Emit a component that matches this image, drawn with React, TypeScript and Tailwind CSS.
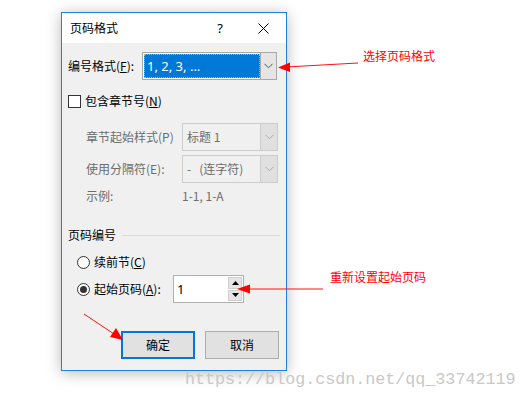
import React from "react";

const font = { fontFamily: '"Noto Sans CJK SC", "Noto Sans", sans-serif' };

function Chevron({ color = "#606060" }: { color?: string }) {
  return (
    <svg width="9" height="6" viewBox="0 0 9 6">
      <path d="M0.5 0.8 L4.5 4.8 L8.5 0.8" fill="none" stroke={color} strokeWidth="1" />
    </svg>
  );
}

export default function App() {
  return (
    <div className="relative w-[527px] h-[404px] bg-white overflow-hidden text-[12px] leading-none" style={font}>
      <div className="pt-[12px] pl-[61px]">
        <div className="w-[226px] h-[359px] border border-[#1883d7] bg-[#f0f0f0] shadow-[0_2px_14px_rgba(0,0,0,0.28)] flex flex-col">
          {/* title bar */}
          <div className="h-[30px] bg-white flex items-center pl-[8px] pr-[17px] text-black">
            <span className="text-[12px]">页码格式</span>
            <span className="ml-auto mr-[35px] text-[13px]" style={{ fontFamily: '"Noto Sans", sans-serif' }}>?</span>
            <svg width="11" height="11" viewBox="0 0 11 11">
              <path d="M0.5 0.5 L10.5 10.5 M10.5 0.5 L0.5 10.5" stroke="#000" strokeWidth="1" />
            </svg>
          </div>

          {/* row 1 */}
          <div className="mt-[9px] h-[28px] flex items-center pl-[6px]">
            <span className="w-[74px] text-black">编号格式(<span className="underline">F</span>):</span>
            <div className="w-[135px] h-[28px] border border-[#a8a8a8] bg-white flex p-[1px]">
              <div className="flex-1 bg-[#0078d7] border border-dotted border-[#f7a440] flex items-center pl-[2px] text-white text-[13px]" style={{ fontFamily: '"Noto Sans", sans-serif' }}>
                1, 2, 3, ...
              </div>
              <div className="w-[16px] -my-[1px] -mr-[1px] bg-[#e5e5e5] border-l border-[#a8a8a8] flex items-center justify-center">
                <Chevron color="#555" />
              </div>
            </div>
          </div>

          {/* checkbox */}
          <div className="mt-[13px] h-[16px] flex items-center pl-[6px] text-black">
            <div className="w-[13px] h-[13px] border border-[#333] bg-white" />
            <span className="ml-[4px]">包含章节号(<span className="underline">N</span>)</span>
          </div>

          {/* row 2 */}
          <div className="mt-[14px] h-[28px] flex items-center pl-[24px] text-[#6d6d6d]">
            <span className="w-[96px]">章节起始样式(P)</span>
            <div className="w-[96px] h-[28px] border border-[#cccccc] flex">
              <div className="flex-1 flex items-center pl-[4px]">标题 1</div>
              <div className="w-[17px] bg-[#e0e0e0] border-l border-[#cccccc] flex items-center justify-center">
                <Chevron color="#a8a8a8" />
              </div>
            </div>
          </div>

          {/* row 3 */}
          <div className="mt-[4px] h-[28px] flex items-center pl-[24px] text-[#6d6d6d]">
            <span className="w-[96px]">使用分隔符(E):</span>
            <div className="w-[96px] h-[28px] border border-[#cccccc] flex">
              <div className="flex-1 flex items-center pl-[4px] whitespace-pre">-   (连字符)</div>
              <div className="w-[17px] bg-[#e0e0e0] border-l border-[#cccccc] flex items-center justify-center">
                <Chevron color="#a8a8a8" />
              </div>
            </div>
          </div>

          {/* example */}
          <div className="mt-[5px] h-[16px] flex items-center pl-[24px] text-[#6d6d6d]">
            <span className="w-[96px]">示例:</span>
            <span>1-1, 1-A</span>
          </div>

          {/* group header */}
          <div className="mt-[23px] h-[16px] flex items-center pl-[6px] pr-[6px] text-black">
            <span>页码编号</span>
            <div className="flex-1 ml-[6px] h-px bg-[#dcdcdc]" />
          </div>

          {/* radio 1 */}
          <div className="mt-[11px] h-[16px] flex items-center pl-[15px] text-black">
            <div className="w-[13px] h-[13px] rounded-full border border-[#333] bg-white" />
            <span className="ml-[4px]">续前节(<span className="underline">C</span>)</span>
          </div>

          {/* radio 2 */}
          <div className="mt-[5px] h-[28px] flex items-center pl-[15px] text-black">
            <div className="w-[13px] h-[13px] rounded-full border border-[#333] bg-white flex items-center justify-center">
              <div className="w-[7px] h-[7px] rounded-full bg-[#333]" />
            </div>
            <span className="ml-[4px] w-[79px]">起始页码(<span className="underline">A</span>):</span>
            <div className="w-[71px] h-[28px] border border-[#b0b0b0] bg-white flex">
              <div className="flex-1 flex items-center pl-[3px] text-[13px]" style={{ fontFamily: '"Noto Sans", sans-serif' }}>1</div>
              <div className="w-[16px] flex flex-col gap-[1px] p-[1px] bg-white">
                <div className="flex-1 bg-[#e5e5e5] border border-[#cfcfcf] flex items-center justify-center">
                  <svg width="7" height="4" viewBox="0 0 7 4"><path d="M0 4 L3.5 0 L7 4 Z" fill="#000" /></svg>
                </div>
                <div className="flex-1 bg-[#e5e5e5] border border-[#cfcfcf] flex items-center justify-center">
                  <svg width="7" height="4" viewBox="0 0 7 4"><path d="M0 0 L3.5 4 L7 0 Z" fill="#000" /></svg>
                </div>
              </div>
            </div>
          </div>

          {/* buttons */}
          <div className="mt-[28px] h-[28px] flex pl-[59px] gap-[10px] text-black">
            <div className="w-[74px] h-[28px] border-2 border-[#0078d7] bg-[#e1e1e1] flex items-center justify-center">确定</div>
            <div className="w-[74px] h-[28px] border border-[#adadad] bg-[#e1e1e1] flex items-center justify-center">取消</div>
          </div>
        </div>
      </div>

      {/* annotations */}
      <span className="absolute left-[363px] top-[50px] text-[12px] text-[#ff0000]">选择页码格式</span>
      <span className="absolute left-[330px] top-[271px] text-[12px] text-[#ff0000]">重新设置起始页码</span>
      <svg className="absolute left-0 top-0 pointer-events-none" width="527" height="404" viewBox="0 0 527 404">
        <line x1="358" y1="63" x2="286" y2="67" stroke="#ff1010" strokeWidth="1" />
        <path d="M278 67.5 L290 62.5 L290 72 Z" fill="#ff0000" />
        <line x1="323" y1="289" x2="248" y2="289" stroke="#ff1010" strokeWidth="1" />
        <path d="M237 289 L250 284.5 L250 293.5 Z" fill="#ff0000" />
        <line x1="84" y1="314" x2="114" y2="334" stroke="#ff1010" strokeWidth="1" />
        <path d="M123 340 L110 337 L116 328 Z" fill="#ff0000" />
      </svg>

      <span className="absolute left-[185px] top-[372px] text-[16.7px] text-[#c8c8c8]" style={{ fontFamily: '"Liberation Mono", monospace' }}>
        https://blog.csdn.net/qq_33742119
      </span>
    </div>
  );
}
